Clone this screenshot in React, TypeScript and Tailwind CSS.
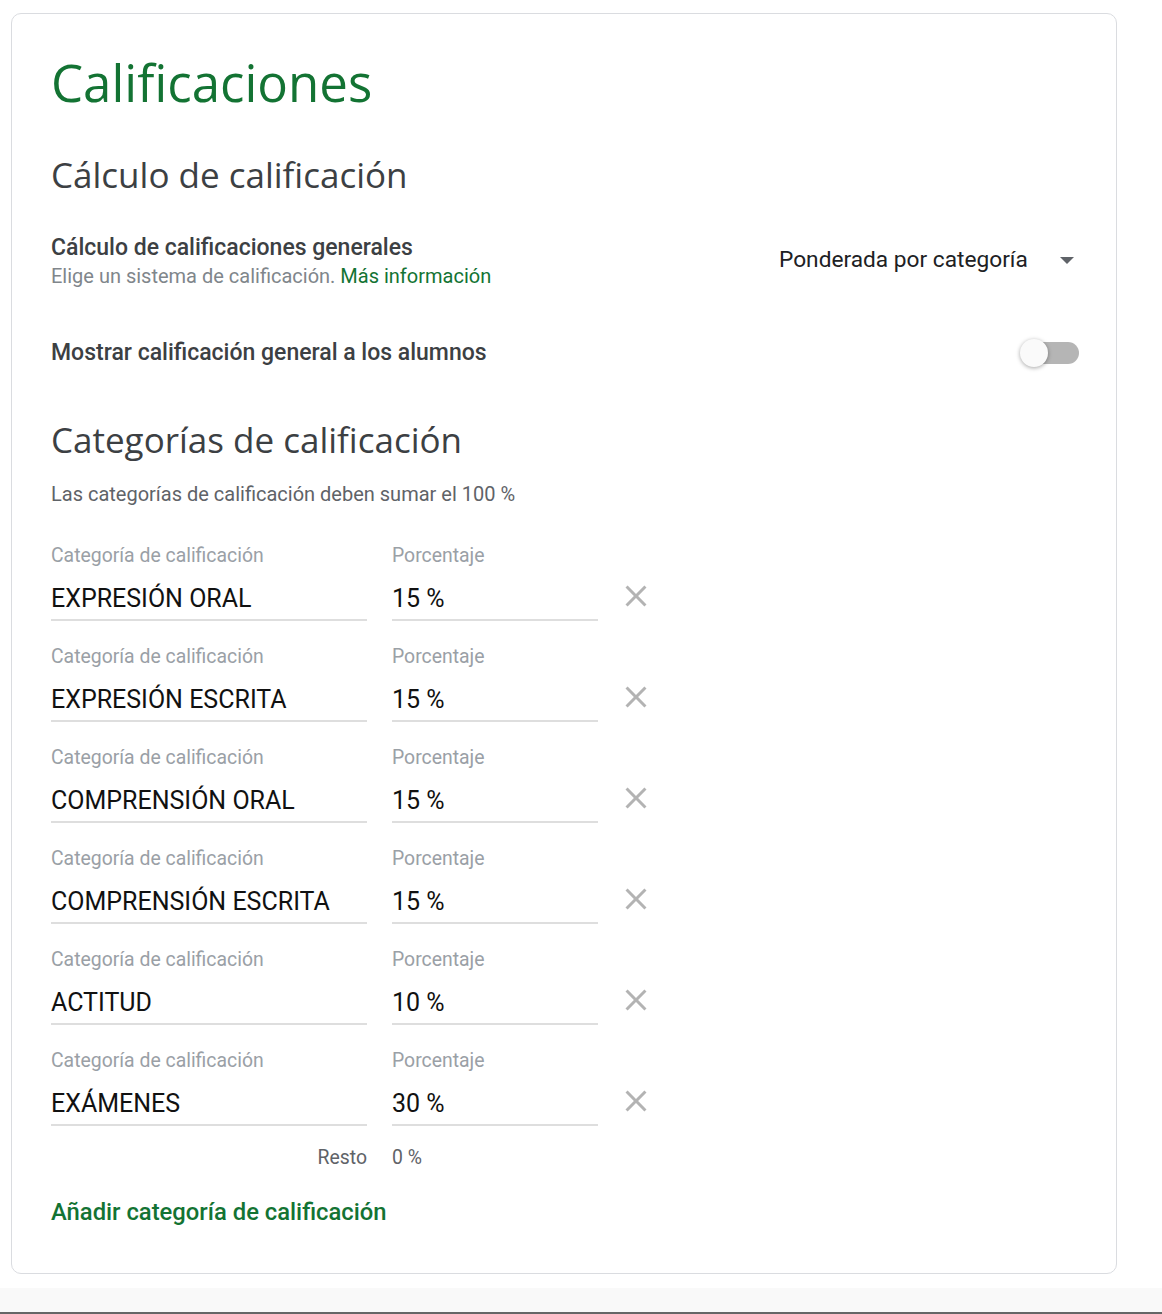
import React from "react";

const rows = [
  { name: "EXPRESIÓN ORAL", pct: "15 %" },
  { name: "EXPRESIÓN ESCRITA", pct: "15 %" },
  { name: "COMPRENSIÓN ORAL", pct: "15 %" },
  { name: "COMPRENSIÓN ESCRITA", pct: "15 %" },
  { name: "ACTITUD", pct: "10 %" },
  { name: "EXÁMENES", pct: "30 %" },
];

function CloseIcon() {
  return (
    <svg width="36" height="36" viewBox="0 0 24 24" className="-m-[7px]">
      <path
        d="M19 6.41L17.59 5 12 10.59 6.41 5 5 6.41 10.59 12 5 17.59 6.41 19 12 13.41 17.59 19 19 17.59 13.41 12z"
        fill="#b3b3b3"
      />
    </svg>
  );
}

function Field({ label, value, width }: { label: string; value: string; width: string }) {
  return (
    <div className={width}>
      <div className="mt-[1px] h-[24px] leading-[24px] text-[19.4px] text-[#9aa0a6] whitespace-nowrap">{label}</div>
      <div className="mt-[16px] h-[30px] leading-[30px] text-[25px] text-[#111] whitespace-nowrap">{value}</div>
      <div className="mt-[5px] h-[2px] bg-[#dedede]" />
    </div>
  );
}

export default function App() {
  return (
    <div className="bg-white w-[1162px] min-h-[1314px] font-['Roboto','Liberation_Sans',sans-serif]">
      <div className="ml-[11px] mt-[13px] w-[1106px] rounded-[10px] border border-[#dadce0] bg-white pl-[39px] pr-[37px] pt-[40px] pb-[49px]">
        <h1 className="h-[56px] leading-[56px] text-[51px] text-[#137333] font-['Open_Sans',sans-serif] tracking-[0px]">
          Calificaciones
        </h1>
        <h2 className="mt-[43px] h-[44px] leading-[44px] text-[35px] text-[#3c4043] font-['Open_Sans',sans-serif]">
          Cálculo de calificación
        </h2>

        <div className="mt-[38px] flex items-center justify-between">
          <div>
            <div className="mt-[1px] h-[24px] leading-[24px] text-[23px] font-medium text-[#3c4043]">
              Cálculo de calificaciones generales
            </div>
            <div className="mt-[4px] h-[24px] leading-[24px] text-[20px] text-[#80868b]">
              Elige un sistema de calificación. <span className="text-[#137333]">Más información</span>
            </div>
          </div>
          <div className="flex w-[300px] items-center justify-between -mt-[3px]">
            <span className="text-[22.7px] text-[#202124] leading-[28px]">Ponderada por categoría</span>
            <svg width="14" height="7" viewBox="0 0 14 7" className="mr-[5px]">
              <path d="M0 0 L14 0 L7 7 Z" fill="#5f6368" />
            </svg>
          </div>
        </div>

        <div className="mt-[52px] flex items-center justify-between">
          <div className="mt-[1px] h-[24px] leading-[24px] text-[23px] font-medium text-[#3c4043]">
            Mostrar calificación general a los alumnos
          </div>
          <div className="relative h-[22px] w-[60px]">
            <div className="absolute right-0 top-0 h-[22px] w-[46px] rounded-full bg-[#b5b5b5]" />
            <div className="absolute left-[1px] top-[-3px] h-[28px] w-[28px] rounded-full bg-[#fafafa] shadow-[0_1px_4px_rgba(0,0,0,0.35)]" />
          </div>
        </div>

        <h2 className="mt-[53px] h-[44px] leading-[44px] text-[35px] text-[#3c4043] font-['Open_Sans',sans-serif]">
          Categorías de calificación
        </h2>
        <div className="mt-[20px] h-[24px] leading-[24px] text-[20px] text-[#5f6368]">
          Las categorías de calificación deben sumar el 100 %
        </div>

        <div className="mt-[37px] flex flex-col gap-[23px]">
          {rows.map((r) => (
            <div key={r.name} className="flex">
              <Field label="Categoría de calificación" value={r.name} width="w-[316px]" />
              <div className="ml-[25px]">
                <Field label="Porcentaje" value={r.pct} width="w-[206px]" />
              </div>
              <div className="ml-[27px] mt-[42px] h-[22px] w-[22px]">
                <CloseIcon />
              </div>
            </div>
          ))}
        </div>

        <div className="mt-[20px] flex h-[24px] leading-[24px] text-[19.4px] text-[#5f6368]">
          <div className="w-[316px] text-right">Resto</div>
          <div className="ml-[25px]">0 %</div>
        </div>

        <div className="mt-[30px] h-[24px] leading-[24px] text-[23.8px] font-medium text-[#137333]">
          Añadir categoría de calificación
        </div>
      </div>
      <div className="mt-[14px] h-[24px] bg-[#f9f9f9]" />
      <div className="h-[2px] bg-[#666]" />
    </div>
  );
}
